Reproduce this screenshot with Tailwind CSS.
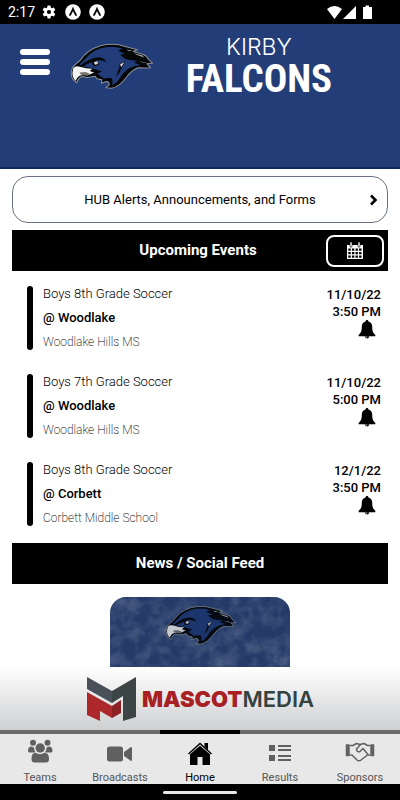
<!DOCTYPE html>
<html lang="en">

<head>
    <meta charset="UTF-8">
    <meta name="viewport" content="width=device-width, initial-scale=1.0">
    <title>Kirby Falcons</title>
    <script src="https://cdn.jsdelivr.net/npm/@tailwindcss/browser@4"></script>
</head>

<body class="flex h-screen flex-col bg-white font-['Roboto',sans-serif] text-black">
    <!-- shared shapes -->
    <svg class="hidden">
        <symbol id="falcon" viewBox="212 128 248 142">
            <path d="M219 204 L228 194 L242 182 Q262 151 302 139 Q342 130 375 141 L411 151 L399 156 L427 164 Q440 169 443 179 L456 191 L439 192 L450 204 L433 205 L413 204 Q394 211 378 233 Q359 260 335 265 L318 263 L328 254 Q328 246 319 245 L305 250 L306 240 L291 237 L286 229 L263 233 L247 230 Q235 236 232 249 L219 237 Q212 222 219 204Z" fill="#050607" stroke="#8b9098" stroke-width="3" stroke-linejoin="round"/>
            <path d="M240 194 L257 178 Q274 155 300 147 Q336 137 366 147 L354 154 L374 163 L360 166 L376 179 L412 184 L400 189 L420 196 Q386 199 366 224 Q352 250 336 255 Q341 242 333 234 L312 236 L292 222 L306 215 L276 205 L246 200Z" fill="#213c78"/>
            <path d="M243 198 Q266 178 290 174 Q312 171 320 188 Q306 179 288 183 L298 192 Q292 202 280 198 L277 188 Q262 192 250 201Z" fill="#050607"/>
            <path d="M283 187 L292 185 L295 191 Q290 197 284 194Z" fill="#d7d9dc"/>
            <path d="M222 204 Q230 197 241 201 L260 206 L278 207 L270 214 L283 218 L268 225 L246 226 Q232 230 229 243 Q218 234 219 218Z" fill="#f3f3f3"/>
            <path d="M240 218 L258 217 L270 222 L263 228 L244 225Z" fill="#77736d"/>
            <path d="M376 185 Q354 190 358 204 L347 231 Q359 222 363 207Z" fill="#050607"/>
            <path d="M373 187 L360 194 L363 203Z" fill="#d7d9dc"/>
            <path d="M379 150 L398 154 L384 154Z M401 161 L426 168 L431 174 L409 166Z M414 186 L430 187 L441 191Z" fill="#b4b7bb"/>
        </symbol>
        <symbol id="bell" viewBox="0 0 18 20">
            <path d="M9 0 C10 0 10.500 .7 10.500 1.700 C13.500 2.300 14.500 4.800 14.500 7.500 C14.500 12 15.600 13.500 17.800 15.500 V17 H.2 V15.500 C2.400 13.500 3.500 12 3.500 7.500 C3.500 4.800 4.500 2.300 7.500 1.700 C7.500 .7 8 0 9 0Z"/>
            <path d="M6.500 17 H11.500 Q11 19.600 9 19.600 Q7 19.600 6.500 17Z"/>
            <path d="M7.600 17.500 Q8 18.800 9 18.900" fill="none" stroke="#fff" stroke-width=".8"/>
        </symbol>
        <symbol id="app" viewBox="0 0 16 16">
            <circle cx="8" cy="8" r="7.800" fill="#fff"/>
            <path d="M5 11 Q7 7.500 8 5 Q9 7.500 11 11" fill="none" stroke="#000" stroke-width="1.800" stroke-linecap="round"/>
        </symbol>
    </svg>

    <!-- status bar -->
    <div class="flex h-6 shrink-0 items-center gap-2 bg-black pr-7 pl-2 text-white">
        <span class="w-[25px] text-sm">2:17</span>
        <svg class="h-4 w-4" viewBox="-8 -8 16 16">
            <circle r="3.400" fill="none" stroke="#fff" stroke-width="2.600"/>
            <g fill="#fff">
                <path id="tooth" d="M-1.400 -6.500H1.400L2 -3.500H-2Z"/>
                <use href="#tooth" transform="rotate(60)"/>
                <use href="#tooth" transform="rotate(120)"/>
                <use href="#tooth" transform="rotate(180)"/>
                <use href="#tooth" transform="rotate(240)"/>
                <use href="#tooth" transform="rotate(300)"/>
            </g>
        </svg>
        <svg class="h-4 w-4"><use href="#app"/></svg>
        <svg class="h-4 w-4"><use href="#app"/></svg>
        <svg class="ml-auto h-4 w-[46px]" viewBox="0 0 46 16" fill="#fff">
            <path d="M1 5 Q8.500 -1 16 5 L8.500 15Z"/>
            <path d="M30 2 V15 H17Z"/>
            <path d="M37 3 H39.500 V1.500 H43 V3 H46 V15 H37Z"/>
        </svg>
    </div>

    <!-- team header -->
    <header class="flex h-[145px] shrink-0 items-start border-b-2 border-[#0d2763] bg-[#223d77] pl-5 text-white">
        <button type="button" aria-label="Menu" class="mt-[25px] flex w-[30px] flex-col gap-1">
            <span class="h-[6px] rounded-sm bg-white"></span>
            <span class="h-[6px] rounded-sm bg-white"></span>
            <span class="h-[6px] rounded-sm bg-white"></span>
        </button>
        <svg class="mt-[18px] ml-5 h-12 w-[84px]"><use href="#falcon"/></svg>
        <h1 class="mt-[11px] ml-7 w-[154px] text-center">
            <span class="block font-['Inter',sans-serif] text-[23px] leading-6 font-light">KIRBY</span>
            <span class="block font-['Roboto_Condensed',sans-serif] text-[39px] leading-10 font-bold">FALCONS</span>
        </h1>
    </header>

    <main class="min-h-0 flex-1 overflow-y-auto px-3 pt-[7px] [scrollbar-width:none]">
        <a href="#" class="flex h-[47px] items-center rounded-2xl border border-gray-500 pr-2 pl-5">
            <span class="flex-1 text-center text-[13px]">HUB Alerts, Announcements, and Forms</span>
            <svg class="h-3 w-3" viewBox="0 0 12 12"><path d="M4 1.500 L8.500 6 L4 10.500" fill="none" stroke="#000" stroke-width="2.600"/></svg>
        </a>

        <div class="mt-[7px] grid h-[41px] grid-cols-[1fr_auto_1fr] items-center bg-black pr-1 text-white">
            <h2 class="col-start-2 text-[15px] font-bold">Upcoming Events</h2>
            <button type="button" aria-label="Calendar" class="flex h-8 w-[58px] items-center justify-center justify-self-end rounded-lg border-2 border-white">
                <svg class="h-[18px] w-4" viewBox="0 0 16 18">
                    <path d="M0 3 H16 V17 H0Z" fill="#fff"/>
                    <path d="M3 0 H5 V5 H3Z M11 0 H13 V5 H11Z" fill="#fff" stroke="#000" stroke-width=".6"/>
                    <path d="M1.300 6.500h2.400v2.200H1.300z M4.900 6.500h2.400v2.200H4.900z M8.500 6.500h2.400v2.200H8.500z M12.100 6.500h2.400v2.200h-2.400z M1.300 10h2.400v2.200H1.300z M4.900 10h2.400v2.200H4.900z M8.500 10h2.400v2.200H8.500z M12.100 10h2.400v2.200h-2.400z M1.300 13.500h2.400v2.200H1.300z M4.900 13.500h2.400v2.200H4.900z M8.500 13.500h2.400v2.200H8.500z M12.100 13.500h2.400v2.200h-2.400z" fill="#000"/>
                </svg>
            </button>
        </div>

        <ul class="flex flex-col gap-6 pt-[15px] pr-[7px] pb-[17px] pl-[15px]">
            <li class="flex h-16">
                <span class="w-[6px] rounded-full bg-black"></span>
                <div class="ml-[10px] flex flex-1 flex-col justify-center text-[13px] leading-6">
                    <p class="shrink-0 font-light">Boys 8th Grade Soccer</p>
                    <p class="shrink-0 font-medium">@ Woodlake</p>
                    <p class="shrink-0 text-xs leading-6 font-extralight">Woodlake Hills MS</p>
                </div>
                <div class="text-right text-[13px] leading-[17px] font-medium">
                    <p>11/10/22</p>
                    <p>3:50 PM</p>
                    <button type="button" aria-label="Set reminder" class="mr-[5px]"><svg class="h-[19px] w-[18px]"><use href="#bell"/></svg></button>
                </div>
            </li>
            <li class="flex h-16">
                <span class="w-[6px] rounded-full bg-black"></span>
                <div class="ml-[10px] flex flex-1 flex-col justify-center text-[13px] leading-6">
                    <p class="shrink-0 font-light">Boys 7th Grade Soccer</p>
                    <p class="shrink-0 font-medium">@ Woodlake</p>
                    <p class="shrink-0 text-xs leading-6 font-extralight">Woodlake Hills MS</p>
                </div>
                <div class="text-right text-[13px] leading-[17px] font-medium">
                    <p>11/10/22</p>
                    <p>5:00 PM</p>
                    <button type="button" aria-label="Set reminder" class="mr-[5px]"><svg class="h-[19px] w-[18px]"><use href="#bell"/></svg></button>
                </div>
            </li>
            <li class="flex h-16">
                <span class="w-[6px] rounded-full bg-black"></span>
                <div class="ml-[10px] flex flex-1 flex-col justify-center text-[13px] leading-6">
                    <p class="shrink-0 font-light">Boys 8th Grade Soccer</p>
                    <p class="shrink-0 font-medium">@ Corbett</p>
                    <p class="shrink-0 text-xs leading-6 font-extralight">Corbett Middle School</p>
                </div>
                <div class="text-right text-[13px] leading-[17px] font-medium">
                    <p>12/1/22</p>
                    <p>3:50 PM</p>
                    <button type="button" aria-label="Set reminder" class="mr-[5px]"><svg class="h-[19px] w-[18px]"><use href="#bell"/></svg></button>
                </div>
            </li>
        </ul>

        <h2 class="flex h-[41px] items-center justify-center bg-black text-[15px] font-bold text-white">News / Social Feed</h2>

        <!-- first news card, continues below the fold -->
        <article class="mx-auto mt-[13px] w-[180px] overflow-hidden rounded-2xl bg-[#2c4272]">
            <svg class="w-full" viewBox="0 0 180 180">
                <filter id="grunge" x="0" y="0" width="100%" height="100%">
                    <feTurbulence type="fractalNoise" baseFrequency=".07" numOctaves="5" seed="8"/>
                    <feColorMatrix values="0 0 0 0 .45  0 0 0 0 .53  0 0 0 0 .66  .7 0 0 0 -.26"/>
                </filter>
                <rect width="180" height="180" filter="url(#grunge)"/>
                <use href="#falcon" x="55" y="7" width="72" height="42"/>
                <rect width="180" height="180" fill="#0b1c40" opacity=".2"/>
            </svg>
        </article>
    </main>

    <!-- sponsor banner -->
    <a href="#" class="flex h-[63px] shrink-0 items-center justify-center gap-[5px] bg-linear-to-b from-white to-[#cfd0d2]">
        <svg class="h-[46px] w-[51px]" viewBox="0 0 51 46">
            <path d="M1 1 L26 15 V27 L1 13Z" fill="#485059"/>
            <path d="M26 15 L50 1 V41 L37 45 V20 L26 27Z" fill="#3b4644"/>
            <path d="M1 16 L26 30 V42 L14 35 V45 L1 39Z" fill="#ad282a"/>
            <path d="M26 30 L35 24 V37 L26 42Z" fill="#8d2025"/>
        </svg>
        <span class="font-['Inter',sans-serif] text-[22px] leading-6"><span class="font-black text-[#a82024]">MASCOT</span><span class="font-semibold text-[#344240]">MEDIA</span></span>
    </a>

    <!-- tabs -->
    <nav class="grid h-[54px] shrink-0 grid-cols-5 bg-[#e8e8e8] text-center text-[11px] leading-3 text-[#555]">
        <a href="#" class="flex flex-col items-center border-t-4 border-[#6c6c6c]">
            <svg class="mt-1 h-7 w-7" viewBox="0 0 28 28" fill="#606060">
                <circle cx="7" cy="4.800" r="3"/><circle cx="21.500" cy="4.800" r="3"/>
                <path d="M2 13 Q2 8.500 5.500 8.500 L8 9.500 Q8 12.500 9.500 14.500 H4 Q2 14.500 2 13Z M26.500 13 Q26.500 8.500 23 8.500 L20.500 9.500 Q20.500 12.500 19 14.500 H24.500 Q26.500 14.500 26.500 13Z"/>
                <circle cx="14.200" cy="10" r="4.700"/>
                <path d="M5.500 21 Q5.500 14.800 9.500 14.800 Q14 17.500 18.500 14.800 Q23 14.800 23 21 Q23 24.500 20 24.500 H8.500 Q5.500 24.500 5.500 21Z"/>
            </svg>
            <span class="mt-[6px]">Teams</span>
        </a>
        <a href="#" class="flex flex-col items-center border-t-4 border-[#6c6c6c]">
            <svg class="mt-1 h-7 w-7" viewBox="0 0 28 28" fill="#606060">
                <rect x="1" y="8.500" width="16" height="15" rx="2.500"/>
                <path d="M18 14 L25 9 Q26 9 26 10 V22 Q26 23 25 23 L18 18Z"/>
            </svg>
            <span class="mt-[6px]">Broadcasts</span>
        </a>
        <a href="#" aria-current="page" class="flex flex-col items-center border-t-4 border-black text-black">
            <svg class="mt-1 h-7 w-7" viewBox="0 0 28 28">
                <path d="M4 15.500 L14 7.500 L24 15.500 V27 H16.500 V19 H11.500 V27 H4Z"/>
                <path d="M2 16 L14 5.500 L26 16" fill="none" stroke="#e8e8e8" stroke-width="3"/>
                <path d="M18.500 5 H22 V12 L18.500 9Z"/>
                <path d="M2.500 16 L14 5.500 L25.500 16" fill="none" stroke="#000" stroke-width="1.500"/>
            </svg>
            <span class="mt-[6px]">Home</span>
        </a>
        <a href="#" class="flex flex-col items-center border-t-4 border-[#6c6c6c]">
            <svg class="mt-1 h-7 w-7" viewBox="0 0 28 28" fill="#606060">
                <path d="M3 7 H9 V13 H3Z M3 17 H9 V23 H3Z M12 7 H25 V9 H12Z M12 11 H25 V13 H12Z M12 17 H25 V19 H12Z M12 21 H25 V23 H12Z"/>
            </svg>
            <span class="mt-[6px]">Results</span>
        </a>
        <a href="#" class="flex flex-col items-center border-t-4 border-[#6c6c6c]">
            <svg class="mt-1 h-7 w-[30px]" viewBox="0 0 30 28" fill="none" stroke="#606060" stroke-width="1.500" stroke-linejoin="round">
                <path d="M1.500 7 H4 V17.500 H1.500Z M26 7 H28.500 V17.500 H26Z" fill="#606060"/>
                <path d="M5 7.500 H8 L11.500 5.500 L15 6.500 L19 5.500 L22.500 7.500 H25 M5 17 H7 L12 22 Q14 23.500 16 22 L22.500 17 H25"/>
                <path d="M15.500 6.500 L11.500 11 Q11.500 14.500 15 13.500 L18 10.500 L23 16.500"/>
            </svg>
            <span class="mt-[6px]">Sponsors</span>
        </a>
    </nav>

    <!-- gesture bar -->
    <div class="flex h-4 shrink-0 items-center justify-center bg-black">
        <span class="h-[3px] w-[74px] rounded-full bg-gray-200"></span>
    </div>
</body>

</html>
